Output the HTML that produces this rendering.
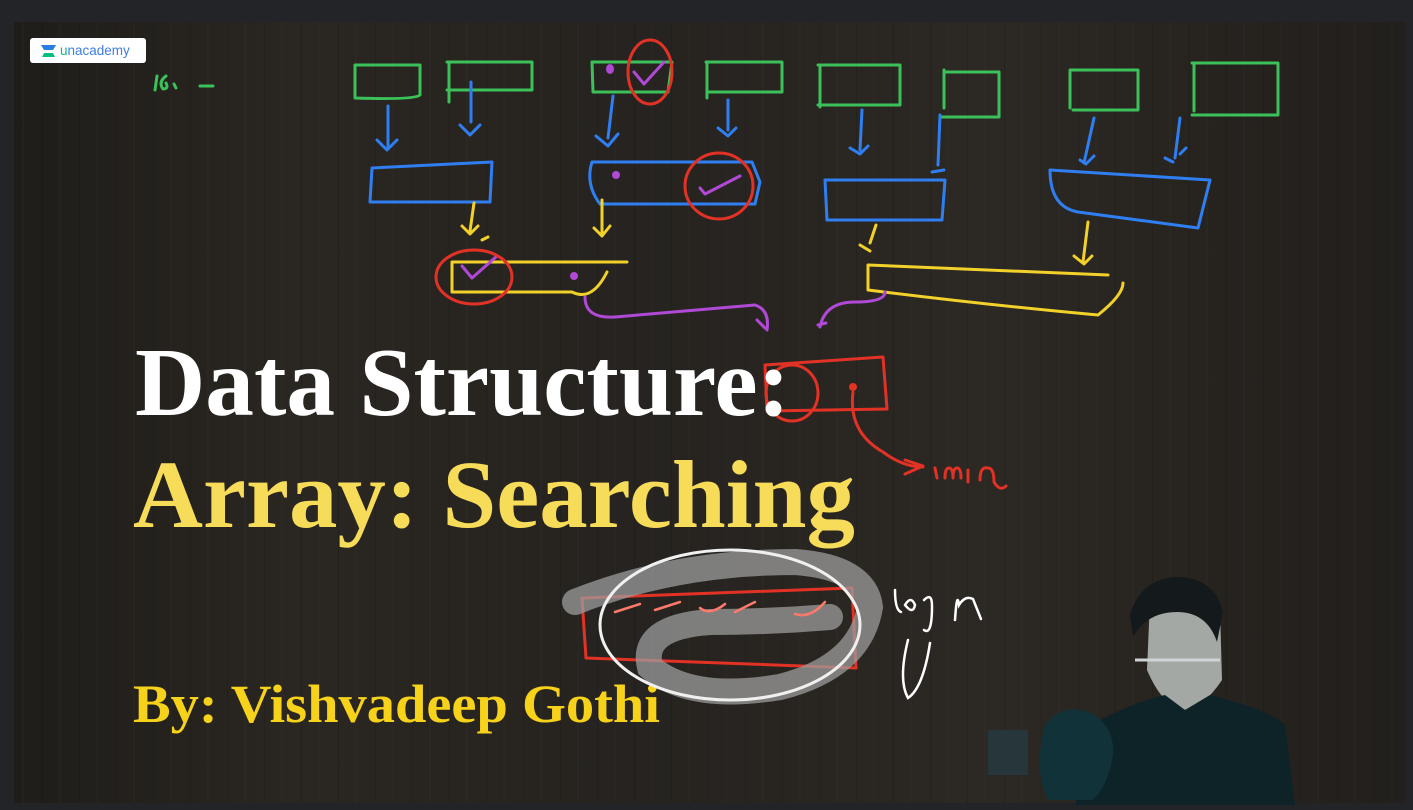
<!DOCTYPE html>
<html><head><meta charset="utf-8"><style>
html,body{margin:0;padding:0;background:#232427;width:1413px;height:810px;overflow:hidden}
svg{display:block}
</style></head><body>
<svg width="1413" height="810" viewBox="0 0 1413 810" xmlns="http://www.w3.org/2000/svg">
<defs>
<linearGradient id="wood" x1="0" x2="1" y1="0" y2="0">
<stop offset="0" stop-color="#1f1d1a"/><stop offset="0.2" stop-color="#2a2621"/><stop offset="0.45" stop-color="#262320"/><stop offset="0.7" stop-color="#2c2823"/><stop offset="1" stop-color="#221f1c"/>
</linearGradient>
<pattern id="grain" width="37" height="810" patternUnits="userSpaceOnUse">
<rect x="5" width="1" height="810" fill="#000" opacity="0.12"/>
<rect x="22" width="2" height="810" fill="#3a342d" opacity="0.15"/>
</pattern>
</defs>
<rect width="1413" height="810" fill="#232427"/>
<rect x="14" y="22" width="1391" height="781" fill="url(#wood)"/>
<rect x="14" y="22" width="1391" height="781" fill="url(#grain)"/>

<rect x="30" y="38" width="116" height="25" rx="3" fill="#fff"/>
<path d="M41 45 h15 l-3 5 h-9z" fill="#2a7de1"/>
<path d="M44 53 h9 l2 4 h-13z" fill="#08bd80"/>
<text x="60" y="55" font-family="Liberation Sans, sans-serif" font-size="13.5" fill="#3d7fe0"><tspan fill="#08bd80">u</tspan>nacademy</text>

<g fill="none" stroke-linecap="round" stroke-linejoin="round" stroke-width="3">
<g stroke="#3cc05a">
<path d="M155 90 l2 -14 M166 76 q-8 6 -3 13 q6 0 3 -6 M174 84 l2 4 M200 86 h13"/>
<path d="M355 65 h65 v30 q-5 5 -65 3 z"/>
<path d="M447 62 h85 v28 h-85 M449 62 v40"/>
<path d="M592 62 h80 l-4 30 h-75 z"/>
<path d="M706 62 h76 v30 h-75 M707 62 v36"/>
<path d="M818 65 h82 v40 h-82 M820 65 v42"/>
<path d="M944 72 h55 v45 h-58 M944 70 v38"/>
<path d="M1070 70 h68 v40 h-65 M1070 72 v36"/>
<path d="M1192 63 h86 v52 h-86 M1194 63 v48"/>
</g>
<g stroke="#2f7ff2">
<path d="M388 106 v42 M377 140 l10 10 l10 -10"/>
<path d="M471 82 v40 M460 125 l10 10 l10 -10"/>
<path d="M613 96 l-5 42 M596 136 l12 10 l10 -12"/>
<path d="M728 100 v30 M718 128 l10 8 l8 -8"/>
<path d="M372 168 l120 -6 l-2 40 l-120 0 z"/>
<path d="M592 162 h160 l8 20 l-5 22 h-155 q-15 -20 -8 -42"/>
<path d="M862 110 l-2 40 M850 148 l10 6 l8 -8"/>
<path d="M940 115 l-2 50 M932 172 l12 -2"/>
<path d="M825 180 h120 l-3 40 h-115 z"/>
<path d="M1094 118 l-10 45 M1080 160 l6 4 l8 -8"/>
<path d="M1180 118 l-5 40 M1165 158 l8 4 M1180 154 l6 -6"/>
<path d="M1050 170 l160 10 l-12 48 l-120 -16 q-28 -5 -28 -42"/>
</g>
<g stroke="#f3d12b">
<path d="M474 203 l-4 28 M462 226 l8 8 l8 -8 M482 240 l6 -3"/>
<path d="M602 200 v36 M594 228 l8 8 l8 -10"/>
<path d="M452 262 h175 M452 262 v30 h120 q20 10 35 -20"/>
<path d="M876 225 l-6 18 M860 245 l10 6 M1088 222 l-5 40 M1074 256 l10 8 l8 -8"/>
<path d="M868 265 l240 10 M868 265 v25 q120 15 230 25 q25 -20 25 -32"/>
</g>
<g stroke="#b049d6">
<path d="M462 266 l10 12 l25 -22"/>
<path d="M634 72 l10 12 l20 -22"/>
<path d="M700 188 l5 6 l35 -18"/>
<path d="M585 297 q0 22 30 20 q120 -10 140 -12 q15 5 12 25 M757 320 l8 8"/>
<path d="M885 292 q0 10 -30 10 q-30 0 -35 25 M818 325 l8 -2"/>
</g>
<g fill="#b049d6" stroke="none"><circle cx="574" cy="276" r="4"/><circle cx="616" cy="175" r="4"/><ellipse cx="610" cy="69" rx="4" ry="5"/></g>
<g stroke="#e23226">
<ellipse cx="650" cy="72" rx="22" ry="32"/>
<ellipse cx="719" cy="186" rx="34" ry="33"/>
<ellipse cx="474" cy="277" rx="38" ry="27"/>
<path d="M765 365 l118 -8 l4 52 l-120 2 z"/>
<ellipse cx="792" cy="393" rx="26" ry="28"/>
<path d="M853 392 q-5 40 30 60 q20 15 40 15 M905 460 l18 6 l-18 8"/>
<path d="M935 468 l2 10 M945 478 q0 -10 4 -10 q4 0 4 10 q0 -10 4 -10 q4 0 4 10 M968 470 v12 M980 480 q0 -14 8 -12 q6 0 6 14 q6 10 12 4"/>
<path d="M582 598 l270 -10 l4 80 l-270 -10 z"/>
</g>
<circle cx="853" cy="387" r="4" fill="#e23226"/>
</g>

<text x="135" y="415" textLength="655" lengthAdjust="spacingAndGlyphs" font-family="Liberation Serif, serif" font-weight="bold" font-size="98" fill="#ffffff">Data Structure:</text>
<text x="133" y="527" textLength="722" lengthAdjust="spacingAndGlyphs" font-family="Liberation Serif, serif" font-weight="bold" font-size="96" fill="#f7dc5a">Array: Searching</text>
<text x="133" y="722" textLength="527" lengthAdjust="spacingAndGlyphs" font-family="Liberation Serif, serif" font-weight="bold" font-size="54" fill="#f7d21a">By: Vishvadeep Gothi</text>

<g fill="none" stroke-linecap="round">
<path d="M575 602 q100 -40 220 -40 q70 5 75 45 q-10 60 -90 80 q-90 15 -130 -20 q-10 -40 60 -45 q60 0 120 -5" stroke="#9c9c9c" stroke-width="26" opacity="0.75"/>
<ellipse cx="730" cy="625" rx="130" ry="75" stroke="#f0f0f0" stroke-width="3"/>
<g stroke="#ff7a6a" stroke-width="2.5"><path d="M615 612 l25 -8 M655 610 l25 -8 M700 608 q10 8 25 -4 M735 612 q10 -5 20 -10 M795 614 q15 5 30 -12"/></g>
<g stroke="#fff" stroke-width="2.5"><path d="M895 590 q0 20 6 22 M905 605 q6 -10 10 0 q-2 10 -10 0 M924 600 q8 -8 8 6 q0 30 -8 24 M908 640 q-10 40 0 58 q15 -10 22 -55 M955 620 q2 -30 4 -15 q6 -10 14 -6 q4 10 8 20"/></g>
</g>

<g>
<path d="M1150 600 q40 -30 70 10 l2 70 q-20 30 -40 30 q-20 -5 -35 -40 z" fill="#a3a8a4"/>
<path d="M1130 615 q10 -35 45 -38 q40 0 48 35 l-6 30 q-10 -30 -40 -30 q-30 0 -44 25 z" fill="#141a1c"/>
<path d="M1135 660 h85" stroke="#d0d4d4" stroke-width="3"/>
<path d="M1100 720 q40 -20 65 -25 l20 15 l25 -15 q60 15 75 30 l10 80 h-220 z" fill="#0d2328"/>
<path d="M1045 725 q20 -25 50 -10 q20 15 18 40 q-5 30 -20 45 h-45 q-15 -30 -3 -75z" fill="#12323a"/>
<path d="M988 730 h40 v45 h-40 z" fill="#26363a"/>
</g>
</svg>
</body></html>
